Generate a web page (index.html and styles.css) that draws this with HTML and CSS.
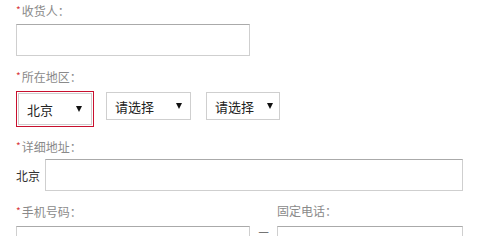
FILE: index.html
```html
<!DOCTYPE html>
<html lang="zh-CN">
<head>
<meta charset="utf-8">
<title>收货地址</title>
<link rel="stylesheet" href="styles.css">
</head>
<body>
<form class="form">
  <div class="label l1"><span class="req">*</span>收货人：</div>
  <div class="input w-name"></div>

  <div class="label l2"><span class="req">*</span>所在地区：</div>
  <div class="selects">
    <div class="sel-wrap error">
      <div class="sel s-prov"><span>北京</span><i class="arrow"></i></div>
    </div>
    <div class="sel s-city"><span>请选择</span><i class="arrow"></i></div>
    <div class="sel s-area"><span>请选择</span><i class="arrow"></i></div>
  </div>

  <div class="label l3"><span class="req">*</span>详细地址：</div>
  <div class="addr-row">
    <span class="prefix">北京</span>
    <div class="input w-addr"></div>
  </div>

  <div class="label-row l4">
    <div class="label col1"><span class="req">*</span>手机号码：</div>
    <div class="label">固定电话：</div>
  </div>
  <div class="phone-row">
    <div class="input w-mobile"></div>
    <span class="dash">—</span>
    <div class="input w-tel"></div>
  </div>
</form>
</body>
</html>
```

FILE: styles.css
```css
html, body {
  margin: 0;
  padding: 0;
  background: #fff;
}
body {
  font-family: "Noto Sans CJK SC", "Liberation Sans", sans-serif;
  font-size: 12px;
  color: #333;
  height: 236px;
  overflow: hidden;
}
.form {
  padding-left: 16px;
}
.label {
  line-height: 20px;
  height: 20px;
  color: #8a8a8a;
  font-size: 12px;
}
.req {
  color: #d9383c;
  font-size: 10px;
  vertical-align: 2px;
  margin-right: 1px;
}
.l1 { margin-bottom: 4px; }
.l2 { margin-top: 10px; margin-bottom: 5px; }
.l3 { margin-top: 9px; margin-bottom: 3px; }
.l4 { margin-top: 10px; margin-bottom: 5px; }

.input {
  box-sizing: border-box;
  height: 32px;
  border: 1px solid #cfcfcf;
  border-top-color: #aaa;
  background: #fff;
}
.w-name { width: 234px; }

.selects {
  display: flex;
  align-items: flex-start;
  height: 36px;
}
.sel-wrap {
  border: 1px solid #c8102e;
  padding: 1px;
}
.sel {
  box-sizing: border-box;
  display: flex;
  align-items: center;
  justify-content: space-between;
  border: 1px solid #cfcfcf;
  height: 28px;
  padding: 0 8px 0 8px;
  font-size: 13px;
  color: #222;
  background: #fff;
  margin-top: 1px;
}
.s-prov {
  width: 74px;
  height: 32px;
  margin-top: 0;
  padding: 0 9px 0 8px;
}
.s-city {
  width: 85px;
  margin-left: 12px;
}
.s-area {
  width: 74px;
  margin-left: 15px;
  padding-right: 6px;
}
.arrow {
  display: block;
  width: 0;
  height: 0;
  border-left: 3px solid transparent;
  border-right: 3px solid transparent;
  border-top: 6px solid #111;
}

.addr-row {
  display: flex;
  align-items: center;
}
.prefix {
  width: 29px;
  font-size: 12px;
  color: #333;
}
.w-addr { width: 418px; }

.label-row {
  display: flex;
}
.col1 { width: 261px; }

.phone-row {
  display: flex;
  align-items: flex-start;
}
.w-mobile { width: 234px; }
.dash {
  width: 27px;
  text-align: center;
  color: #555;
  font-size: 12px;
  line-height: 10px;
}
.w-tel { width: 186px; }
```
